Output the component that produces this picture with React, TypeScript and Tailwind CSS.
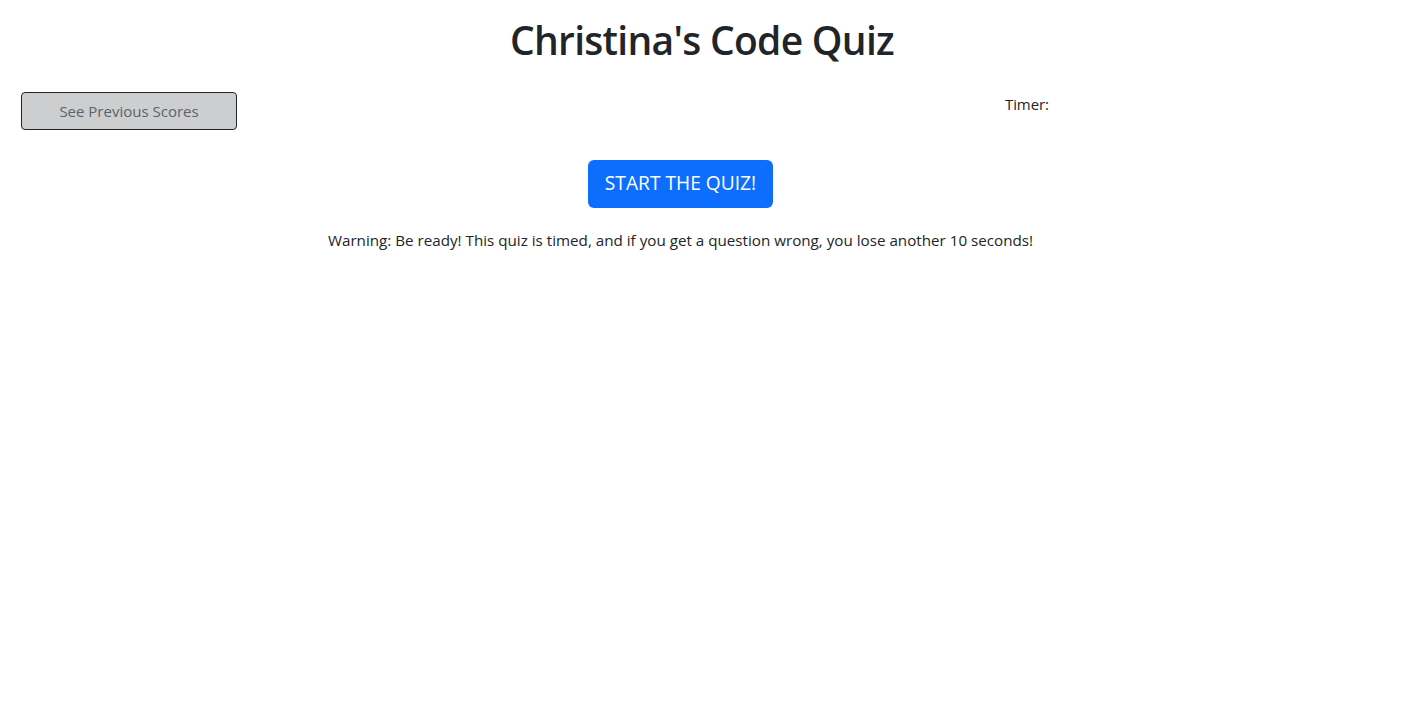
const App = () => {
  return (
    <div className="min-h-screen bg-white text-[#212529] font-['Open_Sans',sans-serif]">
      <h1 className="pt-[17px] text-center text-[39px] font-semibold leading-[1.2] tracking-[-0.7px]">
        Christina's Code Quiz
      </h1>

      <div className="mt-[28px] flex items-start">
        <button className="ml-[21px] h-[38px] w-[216px] rounded-[4px] border border-[#212529] bg-[#cdcecf] text-[15px] text-[#5c636a]">
          See Previous Scores
        </button>
        <div className="ml-[768px] pt-[1px] text-[15px] tracking-[-0.1px]">Timer:</div>
      </div>

      <div className="w-[1361px] text-center">
        <button className="mt-[30px] h-[48px] w-[185px] rounded-[6px] bg-[#0d6efd] text-[19.2px] text-white">
          START THE QUIZ!
        </button>
        <p className="mt-[21px] text-[15.2px]">
          Warning: Be ready! This quiz is timed, and if you get a question wrong, you lose another 10 seconds!
        </p>
      </div>
    </div>
  );
};

export default App;
